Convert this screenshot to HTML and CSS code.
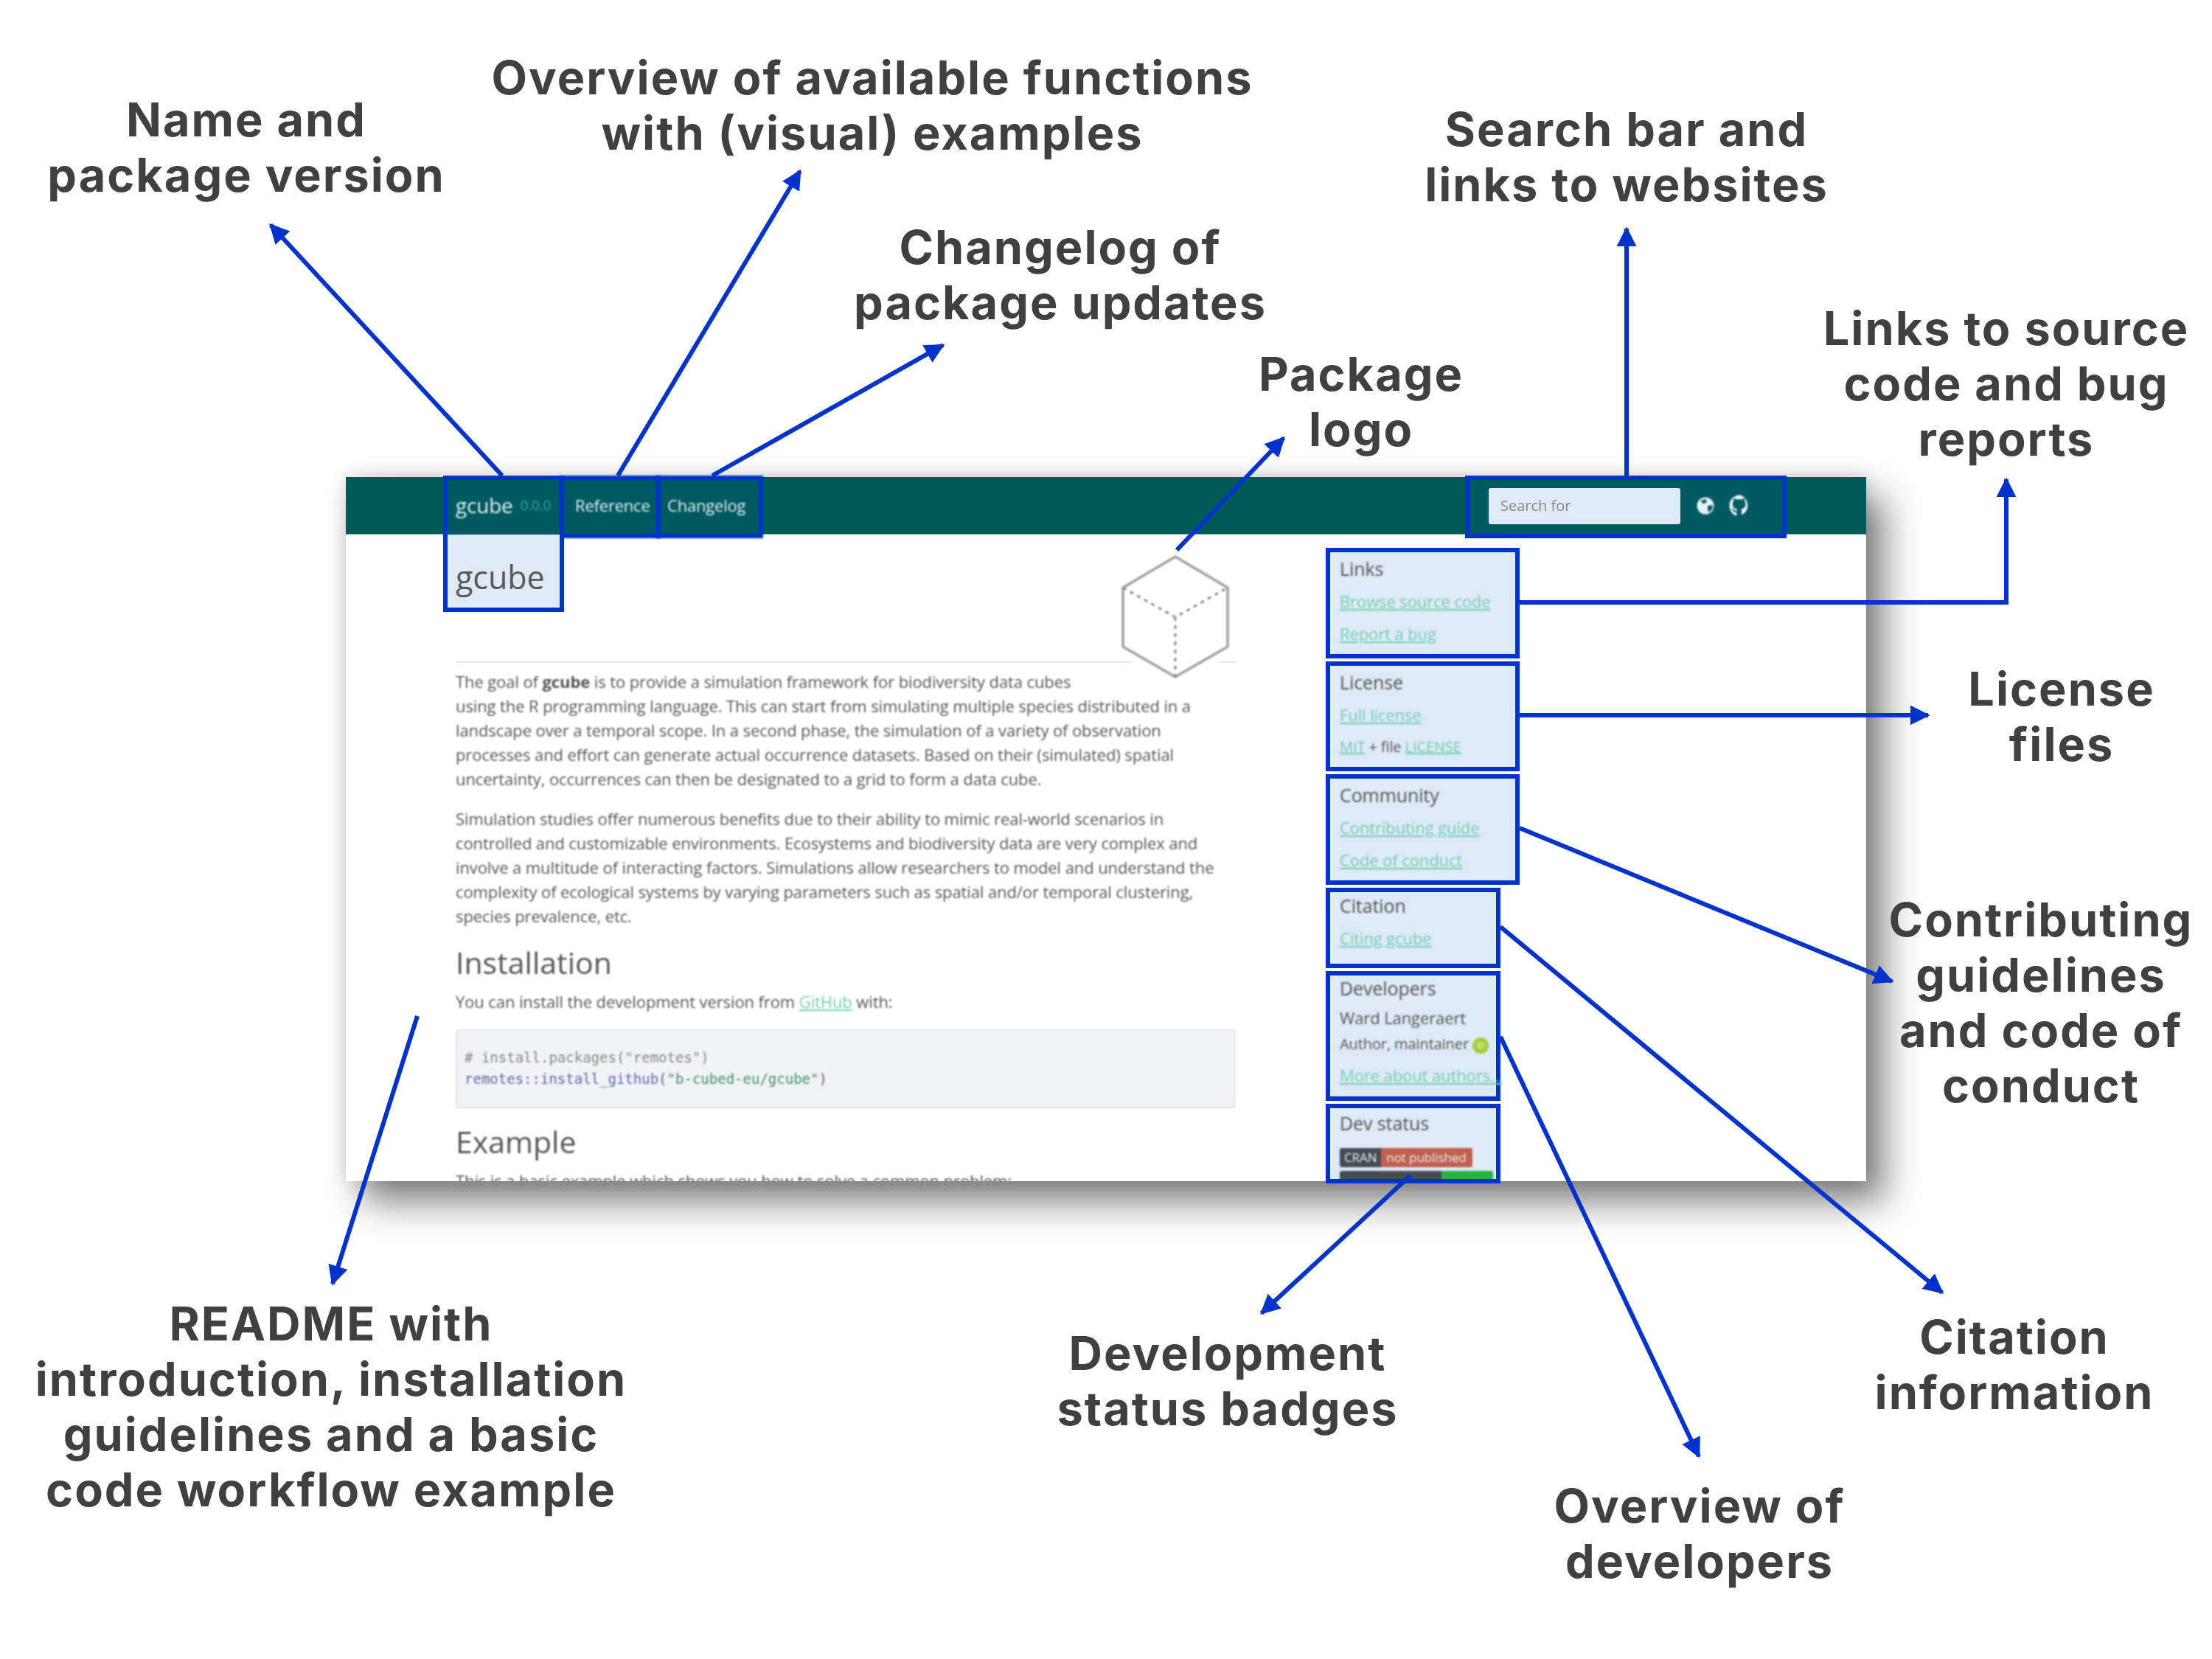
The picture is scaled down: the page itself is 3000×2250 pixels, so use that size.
FILE: index.html
```html
<!DOCTYPE html>
<html>
<head>
<meta charset="UTF-8">
<title>gcube website overview</title>
<link rel="stylesheet" href="styles.css">
</head>
<body>
<div id="canvas">

	<div class="shot">
		<nav class="navbar">
			<div class="navitem brand"><span class="pkg">gcube</span> <span class="version">0.0.0</span></div>
			<div class="navitem ref">Reference</div>
			<div class="navitem log">Changelog</div>
			<div class="searchbox">
				<div class="search">Search for</div>
				<svg class="globe" viewBox="0 0 24 24"><circle cx="12" cy="12" r="11.500" fill="#e8f2f2"/><path d="M6 5l6-2 2 3-3 3-4-1zM15 12l6-1 1 4-5 6-2-4z" fill="#005a60"/></svg>
				<svg class="github" viewBox="0 0 24 24"><path d="M12 1a11 11 0 0 0-3.500 21.400v-3.800c-2.500.5-3.300-1-3.700-2-.3-.6-.6-1-1-1.300-.6-.4-.1-.6.4-.5 1 .2 1.600 1.200 2 1.700.8 1.200 2 .8 2.400.5 0-.8.400-1.300.8-1.600-2.800-.4-5-1.700-5-5.300 0-1.100.4-2 1-2.700-.2-.5-.4-1.500.1-2.800 0 0 .9-.3 2.900 1a10 10 0 0 1 5.200 0c2-1.300 2.900-1 2.900-1 .5 1.300.2 2.300.1 2.800.7.700 1 1.600 1 2.700 0 3.600-2.200 4.900-5 5.300.5.400.9 1.100.9 2.100v3.900A11 11 0 0 0 12 1z" fill="#eef5f5"/></svg>
			</div>
		</nav>

		<div class="main">
			<div class="content">
				<svg class="logo" viewBox="0 0 168 167">
					<path d="M84 2L155 44V124L84 165L13 124V44Z" fill="#fff" stroke="#fff" stroke-width="24"/>
					<path d="M84 2L155 44V124L84 165L13 124V44Z" fill="#fff" stroke="#a0a0a0" stroke-width="3.500"/>
					<path d="M13 44L84 84L155 44M84 84V165" fill="none" stroke="#8c8c8c" stroke-width="3" stroke-dasharray="5 6"/>
				</svg>
				<h1 class="title">gcube</h1>
				<hr class="rule">
				<p><span class="line">The goal of <b>gcube</b> is to provide a simulation framework for biodiversity data cubes</span>
				<span class="line">using the R programming language. This can start from simulating multiple species distributed in a</span>
				<span class="line">landscape over a temporal scope. In a second phase, the simulation of a variety of observation</span>
				<span class="line">processes and effort can generate actual occurrence datasets. Based on their (simulated) spatial</span>
				<span class="line">uncertainty, occurrences can then be designated to a grid to form a data cube.</span></p>
				<p><span class="line">Simulation studies offer numerous benefits due to their ability to mimic real-world scenarios in</span>
				<span class="line">controlled and customizable environments. Ecosystems and biodiversity data are very complex and</span>
				<span class="line">involve a multitude of interacting factors. Simulations allow researchers to model and understand the</span>
				<span class="line">complexity of ecological systems by varying parameters such as spatial and/or temporal clustering,</span>
				<span class="line">species prevalence, etc.</span></p>
				<h2>Installation</h2>
				<p>You can install the development version from <a href="#">GitHub</a> with:</p>
				<pre class="code"><span class="cm"># install.packages("remotes")</span>
<span class="fn">remotes::install_github</span>(<span class="str">"b-cubed-eu/gcube"</span>)</pre>
				<h2 class="second">Example</h2>
				<p>This is a basic example which shows you how to solve a common problem:</p>
			</div>

			<aside class="sidebar">
				<section class="panel wide">
					<h3>Links</h3>
					<div class="row"><a href="#">Browse source code</a></div>
					<div class="row"><a href="#">Report a bug</a></div>
				</section>
				<section class="panel wide">
					<h3>License</h3>
					<div class="row"><a href="#">Full license</a></div>
					<div class="row small"><a href="#">MIT</a> + file <a href="#">LICENSE</a></div>
				</section>
				<section class="panel wide">
					<h3>Community</h3>
					<div class="row"><a href="#">Contributing guide</a></div>
					<div class="row"><a href="#">Code of conduct</a></div>
				</section>
				<section class="panel citation">
					<h3>Citation</h3>
					<div class="row"><a href="#">Citing gcube</a></div>
				</section>
				<section class="panel devs">
					<h3>Developers</h3>
					<div class="person">Ward Langeraert</div>
					<div class="role">Author, maintainer <span class="orcid">iD</span></div>
					<div class="row"><a href="#">More about authors...</a></div>
				</section>
				<section class="panel status">
					<h3>Dev status</h3>
					<div class="badge"><span class="b-dark">CRAN</span><span class="b-red">not published</span></div>
					<div class="badge second-badge"><span class="b-dark wide-dark"></span><span class="b-green"></span></div>
				</section>
			</aside>
		</div>
	</div>

	<!-- arrows -->
	<svg class="arrows" viewBox="0 0 3000 2250">
		<defs>
			<marker id="head" viewBox="0 0 10 10" refX="9" refY="5" markerWidth="4.500" markerHeight="4.500" orient="auto">
				<path d="M0 0L10 5L0 10Z" fill="#0033cc"/>
			</marker>
		</defs>
		<g fill="none" stroke="#0033cc" stroke-width="6" marker-end="url(#head)">
			<path d="M681 645L367 305"/>
			<path d="M838 645L1085 232"/>
			<path d="M966 645L1279 468"/>
			<path d="M1596 746L1741 594"/>
			<path d="M2206 645V310"/>
			<path d="M2061 817H2721V650"/>
			<path d="M2061 970H2615"/>
			<path d="M2061 1123L2566 1331"/>
			<path d="M2035 1257L2634 1753"/>
			<path d="M2035 1406L2304 1975"/>
			<path d="M1913 1594L1711 1781"/>
			<path d="M566 1378L451 1741"/>
		</g>
	</svg>

	<!-- labels -->
	<div class="label l-name">Name and<br>package version</div>
	<div class="label l-overview">Overview of available functions<br>with (visual) examples</div>
	<div class="label l-changelog">Changelog of<br>package updates</div>
	<div class="label l-logo">Package<br>logo</div>
	<div class="label l-search">Search bar and<br>links to websites</div>
	<div class="label l-source">Links to source<br>code and bug<br>reports</div>
	<div class="label l-license">License<br>files</div>
	<div class="label l-contrib">Contributing<br>guidelines<br>and code of<br>conduct</div>
	<div class="label l-citation">Citation<br>information</div>
	<div class="label l-devs">Overview of<br>developers</div>
	<div class="label l-badges">Development<br>status badges</div>
	<div class="label l-readme">README with<br>introduction, installation<br>guidelines and a basic<br>code workflow example</div>
</div>
</body>
</html>
```

FILE: styles.css
```css
body {
	margin: 0;
	background: #fff;
	font-family: "Open Sans", "Liberation Sans", sans-serif;
}

#canvas {
	position: relative;
	width: 3000px;
	height: 2250px;
	overflow: hidden;
}

/* the website screenshot */
.shot {
	position: absolute;
	left: 469px;
	top: 647px;
	width: 2062px;
	height: 955px;
	background: #fff;
	box-shadow: 24px 28px 46px rgba(0, 0, 0, 0.5), 0 -2px 22px rgba(0, 0, 0, 0.14);
	color: #555;
}

.navbar {
	display: flex;
	height: 78px;
	padding-left: 132px;
	background: #005a55;
	border-bottom: 1px solid #7fa8a5;
	box-sizing: border-box;
	color: #e6f0f0;
}

.navitem {
	display: flex;
	align-items: center;
	box-sizing: border-box;
	margin-top: -2px;
	height: 85px;
	padding-bottom: 5px;
	border: 6px solid #0033cc;
	background: #005a62;
	font-size: 22px;
	letter-spacing: -0.2px;
}

.navitem span, .ref, .log {
	filter: blur(0.8px);
}

.brand {
	width: 164px;
	height: 80px;
	padding-left: 11px;
	padding-bottom: 7px;
	border-bottom: none;
	gap: 10px;
}

.pkg {
	font-size: 28px;
}

.version {
	color: #2fa88c;
	font-size: 19px;
}

.ref {
	width: 137px;
	margin-left: -6px;
	padding-left: 15px;
}

.log {
	width: 145px;
	margin-left: -6px;
	padding-left: 9px;
}

.searchbox {
	display: flex;
	align-items: center;
	box-sizing: border-box;
	width: 436px;
	height: 85px;
	margin: -2px 0 0 952px;
	padding: 0 0 3px 26px;
	border: 6px solid #0033cc;
	background: #005a62;
}

.search {
	width: 260px;
	height: 49px;
	line-height: 47px;
	padding-left: 16px;
	box-sizing: border-box;
	border-radius: 3px;
	background: #deeaf6;
	color: #888;
	font-size: 20px;
	filter: blur(0.7px);
}

.globe {
	width: 24px;
	height: 26px;
	margin-left: 22px;
	filter: blur(0.8px);
}

.github {
	width: 32px;
	height: 32px;
	margin-left: 19px;
	filter: blur(0.8px);
}

.main {
	display: flex;
	padding-left: 149px;
}

.content {
	position: relative;
	width: 1058px;
	height: 877px;
	overflow: hidden;
	flex-shrink: 0;
	padding-left: 17px;
	margin-left: -17px;
}

.title {
	box-sizing: border-box;
	width: 164px;
	height: 105px;
	margin: 0 0 0 -17px;
	padding-left: 11px;
	border: 6px solid #0033cc;
	border-top: none;
	background: #deeaf6;
	font-size: 43px;
	line-height: 115px;
	font-weight: 400;
	color: #5a5a5a;
	overflow: hidden;
}

.logo {
	position: absolute;
	left: 909px;
	top: 28px;
	width: 168px;
	height: 167px;
	z-index: 1;
	filter: blur(0.8px);
}

.rule {
	margin: 67px 0 0;
	border: none;
	border-top: 2px solid #e8e8e8;
}

.content p {
	margin: 0;
	font-size: 22px;
	line-height: 33px;
	letter-spacing: -0.1px;
	filter: blur(0.9px);
}

.content p:nth-of-type(1) {
	margin-top: 9px;
}

.content p:nth-of-type(2) {
	margin-top: 21px;
}

.line {
	display: block;
	white-space: nowrap;
}

.content a, .sidebar a {
	color: #6fd0b2;
	text-decoration: underline;
}

.content h2 {
	margin: 18px 0 9px;
	font-size: 41px;
	line-height: 56px;
	font-weight: 400;
	color: #555;
	filter: blur(0.8px);
}

.content h2.second {
	margin-top: 17px;
	margin-bottom: 9px;
}

.code {
	box-sizing: border-box;
	height: 107px;
	margin: 21px 0 0;
	padding: 22px 10px 0;
	background: #f2f3f5;
	border: 2px solid #e6e6e6;
	border-radius: 3px;
	font-family: "DejaVu Sans Mono", "Liberation Mono", monospace;
	font-size: 19px;
	line-height: 29px;
	color: #666;
	filter: blur(0.9px);
}

.cm { color: #888; }
.fn { color: #5b6bab; }
.str { color: #3f8f6f; }

/* highlighted panels of the sidebar */
.sidebar {
	display: flex;
	flex-direction: column;
	gap: 4px;
	margin: 18px 0 0 122px;
	align-items: flex-start;
}

.panel {
	box-sizing: border-box;
	width: 237px;
	padding: 5px 0 0 13px;
	border: 6px solid #0033cc;
	background: #deeaf6;
	font-size: 22px;
	letter-spacing: -0.1px;
	white-space: nowrap;
}

.panel > * {
	filter: blur(0.9px);
}

.wide {
	width: 263px;
	height: 149.500px;
}

.citation {
	height: 109px;
	padding-top: 1px;
}

.devs {
	height: 176px;
	padding-top: 0;
}

.status {
	height: 108px;
	padding-top: 3px;
	overflow: hidden;
}

.panel h3 {
	margin: 0;
	font-size: 25px;
	line-height: 34px;
	font-weight: 400;
	color: #555;
}

.row {
	margin-top: 10px;
	line-height: 34px;
	color: #555;
}

.small {
	font-size: 20px;
}

.person {
	margin-top: 7px;
	line-height: 32px;
}

.role {
	margin-top: 4px;
	font-size: 20px;
	line-height: 32px;
}

.orcid {
	display: inline-block;
	width: 22px;
	height: 22px;
	border-radius: 50%;
	background: #a6ce39;
	color: #fff;
	font-size: 10px;
	line-height: 22px;
	text-align: center;
	vertical-align: 1px;
}

.devs .row {
	margin-top: 9px;
}

.badge {
	display: flex;
	width: fit-content;
	margin-top: 17px;
	height: 26px;
	line-height: 26px;
	font-size: 17px;
	color: #eee;
	border-radius: 3px;
	overflow: hidden;
}

.second-badge {
	margin-top: 5px;
}

.b-dark { background: #444d56; padding: 0 6px; }
.wide-dark { width: 126px; }
.b-red { background: #c0604f; padding: 0 9px 0 7px; }
.b-green { background: #27b34a; width: 70px; }

/* arrows and captions around the screenshot */
.arrows {
	position: absolute;
	left: 0;
	top: 0;
	width: 3000px;
	height: 2250px;
}

.label {
	position: absolute;
	transform: translateX(-50%);
	text-align: center;
	white-space: nowrap;
	font-family: Inter, "Liberation Sans", sans-serif;
	font-size: 63px;
	line-height: 75px;
	font-weight: 700;
	letter-spacing: 2px;
	color: #404040;
}

.l-name { left: 334px; top: 125px; }
.l-overview { left: 1183px; top: 68px; }
.l-changelog { left: 1438px; top: 298px; }
.l-logo { left: 1846px; top: 470px; }
.l-search { left: 2206px; top: 138px; }
.l-source { left: 2721px; top: 408px; }
.l-license { left: 2796px; top: 897px; }
.l-contrib { left: 2768px; top: 1210px; }
.l-citation { left: 2732px; top: 1776px; }
.l-devs { left: 2305px; top: 2005px; }
.l-badges { left: 1665px; top: 1798px; }
.l-readme { left: 449px; top: 1758px; }
```
